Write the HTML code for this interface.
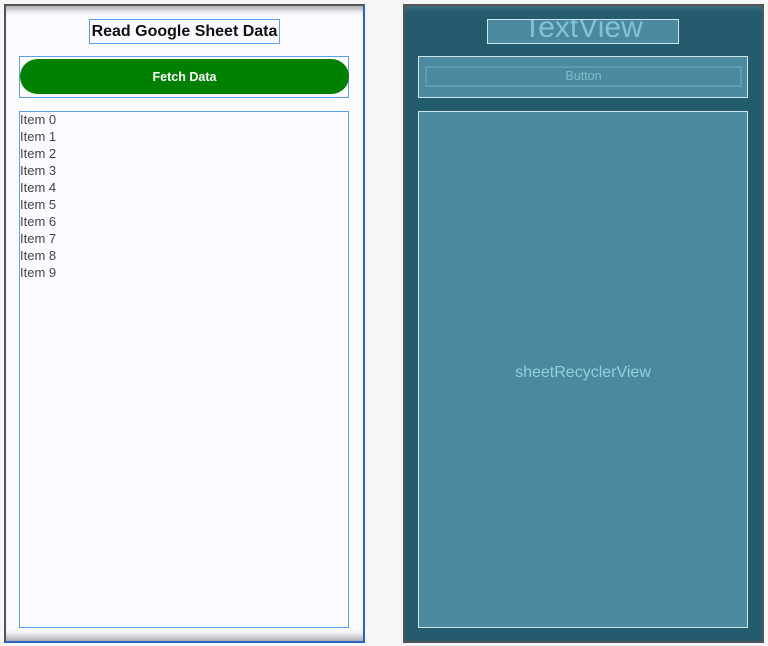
<!DOCTYPE html>
<html><head><meta charset="utf-8"><style>
*{margin:0;padding:0;box-sizing:border-box}
body{width:768px;height:646px;background:#f5f6f8;position:relative;overflow:hidden;font-family:"Liberation Sans",sans-serif}
.abs{position:absolute}
#L{left:4px;top:4px;width:361px;height:639px;background:#fdfbff;border:2px solid #555;border-right-color:#2a64c0;border-bottom-color:#2a64c0;box-shadow:inset 0 8px 6px -4px rgba(0,0,0,.3),inset 0 -10px 8px -6px rgba(0,0,0,.35)}
#R{left:403px;top:4px;width:361px;height:639px;background:#245c6e;border:2px solid #555;box-shadow:inset 0 6px 6px -4px rgba(255,255,255,.15)}
.bb{border:1px solid #5aa0f0}
.wb{border:1px solid #cfe6ee;background:#4b8a9e}
.it{position:absolute;left:20px;font-size:13px;color:#444;line-height:17px;white-space:nowrap}
</style></head><body>
<div id="L" class="abs"></div>
<div id="R" class="abs"></div>

<div class="abs bb" style="left:89px;top:19px;width:191px;height:25px"></div>
<div class="abs" style="left:79px;top:20px;width:211px;text-align:center;font-size:16px;font-weight:bold;color:#111;line-height:23px;white-space:nowrap">Read Google Sheet Data</div>

<div class="abs bb" style="left:19px;top:56px;width:330px;height:42px"></div>
<div class="abs" style="left:20px;top:59px;width:329px;height:35px;background:#008000;border-radius:18px;color:#fff;font-size:12.5px;font-weight:bold;text-align:center;line-height:37px">Fetch Data</div>

<div class="abs bb" style="left:19px;top:111px;width:330px;height:517px"></div>
<div class="it" style="top:111px">Item 0</div>
<div class="it" style="top:128px">Item 1</div>
<div class="it" style="top:145px">Item 2</div>
<div class="it" style="top:162px">Item 3</div>
<div class="it" style="top:179px">Item 4</div>
<div class="it" style="top:196px">Item 5</div>
<div class="it" style="top:213px">Item 6</div>
<div class="it" style="top:230px">Item 7</div>
<div class="it" style="top:247px">Item 8</div>
<div class="it" style="top:264px">Item 9</div>

<div class="abs wb" style="left:487px;top:19px;width:192px;height:25px;overflow:hidden;text-align:center;color:#7fc3d6;font-size:30px;line-height:16px">TextView</div>

<div class="abs wb" style="left:418px;top:56px;width:330px;height:42px"></div>
<div class="abs" style="left:425px;top:66px;width:317px;height:21px;border:2px solid #5e9cb0;color:#7fbccd;font-size:12.5px;text-align:center;line-height:17px">Button</div>

<div class="abs wb" style="left:418px;top:111px;width:330px;height:517px"></div>
<div class="abs" style="left:418px;top:364px;width:330px;text-align:center;color:#8fd0e2;font-size:16px">sheetRecyclerView</div>
</body></html>
